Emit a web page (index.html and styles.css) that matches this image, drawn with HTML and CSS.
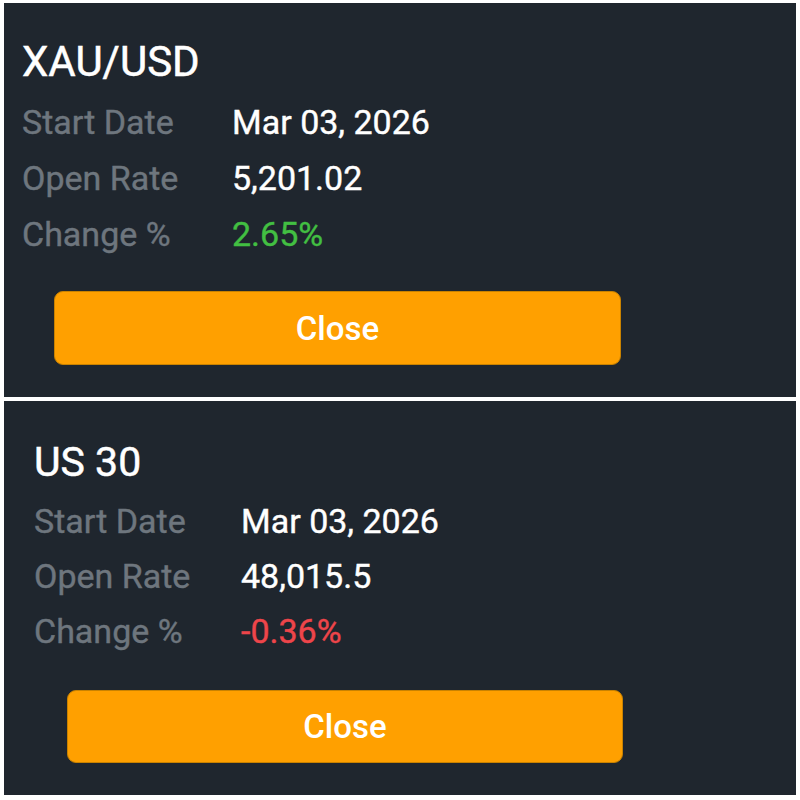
FILE: index.html
```html
<!DOCTYPE html>
<html>
<head>
<meta charset="utf-8">
<link rel="stylesheet" href="styles.css">
</head>
<body>
<div class="collage">
  <section class="panel panel-a">
    <h2 class="title">XAU/USD</h2>
    <div class="rows">
      <div class="row"><span class="label">Start Date</span><span class="value">Mar 03, 2026</span></div>
      <div class="row"><span class="label">Open Rate</span><span class="value">5,201.02</span></div>
      <div class="row"><span class="label">Change %</span><span class="value up">2.65%</span></div>
    </div>
    <button class="close">Close</button>
  </section>
  <section class="panel panel-b">
    <h2 class="title">US 30</h2>
    <div class="rows">
      <div class="row"><span class="label">Start Date</span><span class="value">Mar 03, 2026</span></div>
      <div class="row"><span class="label">Open Rate</span><span class="value">48,015.5</span></div>
      <div class="row"><span class="label">Change %</span><span class="value down">-0.36%</span></div>
    </div>
    <button class="close">Close</button>
  </section>
</div>
</body>
</html>
```
FILE: styles.css
```css
html, body {
  margin: 0;
  padding: 0;
  background: #ffffff;
}
body {
  width: 800px;
  height: 800px;
  font-family: Roboto, "Liberation Sans", sans-serif;
}
.collage {
  display: flex;
  flex-direction: column;
  gap: 4px;
  padding: 3px 4px 0 4px;
}
.panel {
  height: 394px;
  background: #1f262e;
  box-sizing: border-box;
  display: flex;
  flex-direction: column;
  align-items: flex-start;
}
.panel-a {
  padding: 35px 0 0 18px;
}
.panel-b {
  padding: 37px 0 0 30px;
}
.title {
  margin: 0;
  font-size: 42px;
  line-height: 48px;
  font-weight: 400;
  color: #ffffff;
  -webkit-text-stroke: 0.5px currentColor;
}
.panel-b .title {
  font-size: 41px;
}
.rows {
  margin-top: 8px;
  display: flex;
  flex-direction: column;
}
.row {
  display: flex;
  height: 56px;
  line-height: 56px;
  font-size: 34px;
  -webkit-text-stroke: 0.4px currentColor;
}
.panel-b .row {
  height: 55px;
  line-height: 55px;
}
.label {
  width: 210px;
  color: #6e767e;
}
.panel-b .label {
  width: 207px;
}
.value {
  color: #ffffff;
}
.value.up {
  color: #42bf42;
}
.value.down {
  color: #ee454a;
}
.close {
  margin-top: 29px;
  margin-left: 32px;
  width: 567px;
  height: 74px;
  border: 1px solid #c98200;
  border-radius: 9px;
  background: #ffa000;
  color: #ffffff;
  font-family: Roboto, "Liberation Sans", sans-serif;
  font-size: 33px;
  font-weight: 500;
  padding: 0;
}
.panel-b .close {
  margin-top: 31px;
  margin-left: 33px;
  width: 556px;
  height: 73px;
}
```
